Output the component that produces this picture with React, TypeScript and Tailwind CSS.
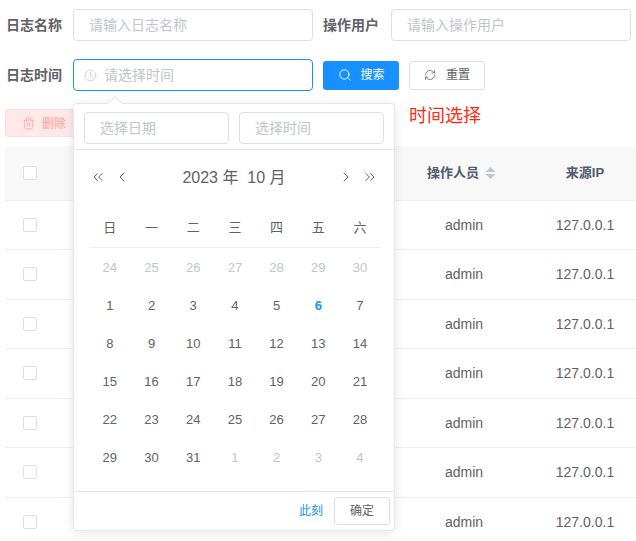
import { ChevronLeft, ChevronRight, ChevronsLeft, ChevronsRight, Clock, RefreshCw, Search, Trash2 } from "lucide-react";

const font = "font-['Liberation_Sans','Noto_Sans_CJK_SC',sans-serif]";

const weekdays = ["日", "一", "二", "三", "四", "五", "六"];

const weeks = [
  [24, 25, 26, 27, 28, 29, 30],
  [1, 2, 3, 4, 5, 6, 7],
  [8, 9, 10, 11, 12, 13, 14],
  [15, 16, 17, 18, 19, 20, 21],
  [22, 23, 24, 25, 26, 27, 28],
  [29, 30, 31, 1, 2, 3, 4],
];

function Field({ placeholder, className }: { placeholder: string; className: string }) {
  return (
    <div className={`flex h-8 items-center rounded border border-[#dcdfe6] bg-white pl-[15px] text-sm text-[#c0c4cc] ${className}`}>
      {placeholder}
    </div>
  );
}

function Checkbox() {
  return <span className="block size-[14px] rounded-[2px] border border-[#dcdfe6] bg-white" />;
}

function TableRow() {
  return (
    <div className="flex h-[49.5px] items-center border-b border-[#ebeef5] text-sm text-[#606266]">
      <div className="flex w-[50px] justify-center">
        <Checkbox />
      </div>
      <div className="ml-[372px] w-[74px] text-center">admin</div>
      <div className="ml-[38px] w-[92px] text-center">127.0.0.1</div>
    </div>
  );
}

function DatePopover() {
  return (
    <div className="absolute left-[73px] top-[103px] h-[428px] w-[322px] rounded-sm border border-[#e4e7ed] bg-white shadow-[0_2px_12px_rgba(0,0,0,0.1)]">
      <div className="absolute -top-[6px] left-[36px] size-[10px] rotate-45 border-l border-t border-[#e4e7ed] bg-white" />
      <div className="flex h-[46px] gap-[10px] border-b border-[#e4e7ed] pl-[10px] pt-2">
        <Field placeholder="选择日期" className="w-[145px]" />
        <Field placeholder="选择时间" className="w-[145px]" />
      </div>
      <div className="flex h-[54px] items-center text-[#606266]">
        <ChevronsLeft className="ml-[16px] size-4" strokeWidth={1.5} />
        <ChevronLeft className="ml-[8px] size-4" strokeWidth={1.5} />
        <div className="ml-[44px] w-[120px] whitespace-pre pt-[1px] text-center text-base">2023 年  10 月</div>
        <ChevronRight className="ml-[44px] size-4" strokeWidth={1.5} />
        <ChevronsRight className="ml-[8px] size-4" strokeWidth={1.5} />
      </div>
      <div className="ml-[15px] mt-[6px] flex h-[38px] w-[292px] items-center border-b border-[#ebeef5] pb-[1px] text-[13px] text-[#606266]">
        {weekdays.map((day) => (
          <div key={day} className="w-[41.7px] text-center">{day}</div>
        ))}
      </div>
      <div className="ml-[15px] w-[292px] pt-[0.5px]">
        {weeks.map((week, w) => (
          <div key={w} className="flex h-[38px] items-center text-[13px]">
            {week.map((date, d) => {
              const muted = w === 0 || (w === 5 && d > 2);
              const today = w === 1 && d === 5;
              return (
                <div
                  key={d}
                  className={`w-[41.7px] text-center ${muted ? "text-[#c0c4cc]" : today ? "font-bold text-[#1890ff]" : "text-[#606266]"}`}
                >
                  {date}
                </div>
              );
            })}
          </div>
        ))}
      </div>
      <div className="absolute inset-x-0 bottom-0 flex h-[39px] items-center justify-end border-t border-[#e4e7ed] pr-1">
        <span className="mr-[11px] text-xs text-[#1890ff]">此刻</span>
        <span className="flex h-7 w-14 items-center justify-center rounded-[3px] border border-[#dcdfe6] text-xs text-[#606266]">确定</span>
      </div>
    </div>
  );
}

export default function App() {
  return (
    <div className={`relative h-[541px] w-[636px] overflow-hidden bg-white ${font}`}>
      <div className="flex items-center pl-[6px] pt-[8.5px]">
        <label className="w-[67px] text-sm font-bold text-[#606266]">日志名称</label>
        <Field placeholder="请输入日志名称" className="w-[240px]" />
        <label className="ml-[10px] w-[68px] text-sm font-bold text-[#606266]">操作用户</label>
        <Field placeholder="请输入操作用户" className="w-[240px]" />
      </div>

      <div className="mt-[18.5px] flex items-center pl-[6px]">
        <label className="w-[67px] text-sm font-bold text-[#606266]">日志时间</label>
        <div className="flex h-8 w-[240px] items-center rounded border border-[#1890ff] bg-white pl-[10px] text-sm text-[#c0c4cc]">
          <Clock className="mr-[7px] size-[13px]" strokeWidth={1.4} />
          请选择时间
        </div>
        <button className="ml-[10px] flex h-[29px] w-[76px] items-center justify-center gap-[8px] rounded-[3px] bg-[#1890ff] pl-[1px] text-xs text-white">
          <Search className="size-[14px]" strokeWidth={1.6} />
          搜索
        </button>
        <button className="ml-[10px] flex h-[29px] w-[76px] items-center justify-center gap-[10px] rounded-[3px] border border-[#dcdfe6] bg-white text-xs text-[#606266]">
          <RefreshCw className="size-3" strokeWidth={1.5} />
          重置
        </button>
      </div>

      <div className="ml-[5px] mt-[18px] flex h-[28px] w-[100px] items-center gap-[7px] rounded-[3px] border border-[#ffdbdb] bg-[#ffe8e8] pl-[16px] pt-[1px] text-xs text-[#ff9c9c]">
        <Trash2 className="size-[13px]" strokeWidth={1.4} />
        删除
      </div>

      <div className="ml-[5px] mt-[9px]">
        <div className="flex h-[54.6px] items-center border-b border-[#ebeef5] bg-[#f8f8f9] text-[13px] font-bold text-[#515a6e]">
          <div className="flex w-[50px] justify-center">
            <Checkbox />
          </div>
          <div className="ml-[372px] flex w-[80px] items-center">
            <span>操作人员</span>
            <svg className="ml-[6px]" width="11" height="14" viewBox="0 0 11 14">
              <path d="M5.5 1 L10.5 6 H0.5 Z" fill="#c0c4cc" />
              <path d="M5.5 13 L10.5 8 H0.5 Z" fill="#c0c4cc" />
            </svg>
          </div>
          <div className="ml-[32px] w-[92px] text-center">来源IP</div>
        </div>
        {Array.from({ length: 7 }, (_, i) => (
          <TableRow key={i} />
        ))}
      </div>

      <DatePopover />
      <div className="absolute left-[409px] top-[102px] text-lg text-[#ff2a12]">时间选择</div>
    </div>
  );
}
